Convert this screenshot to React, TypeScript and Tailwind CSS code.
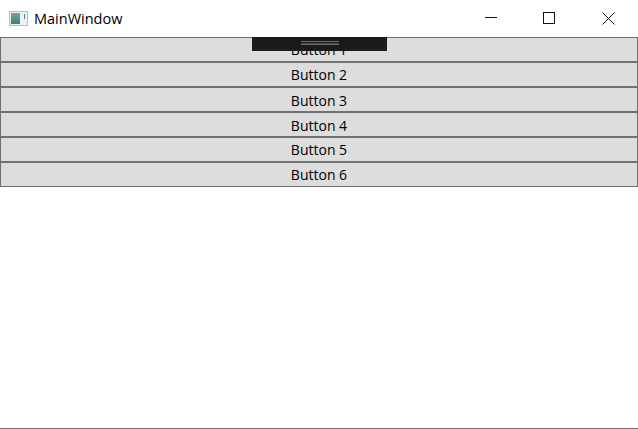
const buttons = [
  { label: "Button 1", leading: "leading-[23px]" },
  { label: "Button 2", leading: "leading-[23px]" },
  { label: "Button 3", leading: "leading-[25px]" },
  { label: "Button 4", leading: "leading-[25px]" },
  { label: "Button 5", leading: "leading-[23px]" },
  { label: "Button 6", leading: "leading-[23px]" },
];

function AppIcon() {
  return (
    <svg width="19" height="16" viewBox="0 0 19 16" className="ml-[9px] shrink-0">
      <defs>
        <linearGradient id="pane" x1="0" y1="0" x2="0" y2="1">
          <stop offset="0" stopColor="#7a9fb4" />
          <stop offset="1" stopColor="#358a5c" />
        </linearGradient>
      </defs>
      <rect x="0.5" y="0.5" width="18" height="14" fill="#eef1f3" stroke="#b4bbc4" />
      <rect x="2" y="2" width="9" height="11" fill="url(#pane)" />
      <rect x="15" y="3" width="1" height="5" fill="#4f8a92" />
    </svg>
  );
}

function TitleBar() {
  return (
    <div className="flex h-[37px] items-center bg-white">
      <AppIcon />
      <span className="ml-[6px] text-[14.5px] text-black [font-family:'Open_Sans',sans-serif]">MainWindow</span>
      <div className="ml-auto flex h-full pb-[1px]">
        <button type="button" className="flex w-[58px] items-center justify-center">
          <svg width="12" height="12" viewBox="0 0 12 12" stroke="#111" fill="none">
            <path d="M0 5.5h12.5" />
          </svg>
        </button>
        <button type="button" className="flex w-[59px] items-center justify-center pr-[1px]">
          <svg width="12" height="12" viewBox="0 0 12 12" stroke="#111" fill="none">
            <rect x="0.5" y="0.5" width="11" height="11" />
          </svg>
        </button>
        <button type="button" className="flex w-[59px] items-center justify-center">
          <svg width="13" height="13" viewBox="0 0 13 13" stroke="#111" fill="none">
            <path d="M0.5 0.5l12 12M12.5 0.5l-12 12" />
          </svg>
        </button>
      </div>
    </div>
  );
}

export default function App() {
  return (
    <div className="relative flex h-[429px] w-[638px] flex-col overflow-hidden border-b border-[#707070] bg-white">
      <TitleBar />
      <div className="relative flex flex-col">
        {buttons.map((b) => (
          <button
            key={b.label}
            type="button"
            className={`h-[25px] w-full border border-[#707070] bg-[#dddddd] text-center text-[14px] text-black [font-family:'Open_Sans',sans-serif] ${b.leading}`}
          >
            {b.label}
          </button>
        ))}
        {/* debug toolbar that sits over the first button */}
        <div className="absolute left-[252px] top-0 flex h-[14px] w-[135px] flex-col items-center bg-[#1b1b1b] pt-[4px]">
          <div className="h-[1px] w-[38px] bg-[#6b6b6b]" />
          <div className="mt-[1px] h-[1px] w-[38px] bg-[#4a4a4a]" />
          <div className="h-[1px] w-[38px] bg-[#6b6b6b]" />
        </div>
      </div>
    </div>
  );
}
